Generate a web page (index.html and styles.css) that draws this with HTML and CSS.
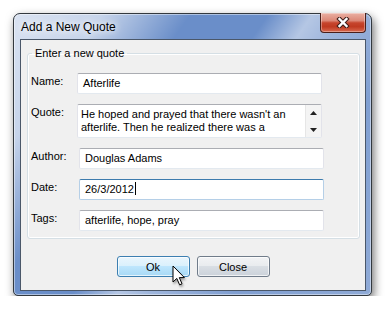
FILE: index.html
```html
<!DOCTYPE html>
<html lang="en">
<head>
    <meta charset="UTF-8">
    <title>Add a New Quote</title>
    <link rel="stylesheet" href="styles.css">
</head>
<body>

<div class="window">
    <div class="titlebar">
        <span class="title">Add a New Quote</span>
        <div class="close-btn">
            <svg width="14" height="11" viewBox="0 0 14 11">
                <path d="M3.5 2 L10.5 9 M10.5 2 L3.5 9" stroke="#3b1c18" stroke-width="4.4" stroke-linecap="square"/>
                <path d="M3.5 2 L10.5 9 M10.5 2 L3.5 9" stroke="#fff" stroke-width="2.4" stroke-linecap="square"/>
            </svg>
        </div>
    </div>

    <div class="client">
        <fieldset class="group">
            <legend>Enter a new quote</legend>

            <div class="row">
                <label>Name:</label>
                <div class="field">Afterlife</div>
            </div>

            <div class="row">
                <label>Quote:</label>
                <div class="field field-quote">
                    <div class="quote-text">He hoped and prayed that there wasn't an afterlife. Then he realized there was a</div>
                    <div class="scrollbar">
                        <svg width="7" height="4" viewBox="0 0 7 4"><path d="M3.5 0 L7 4 L0 4 Z" fill="#222"/></svg>
                        <svg width="7" height="4" viewBox="0 0 7 4"><path d="M0 0 L7 0 L3.5 4 Z" fill="#222"/></svg>
                    </div>
                </div>
            </div>

            <div class="row">
                <label>Author:</label>
                <div class="field field-shift">Douglas Adams</div>
            </div>

            <div class="row">
                <label>Date:</label>
                <div class="field field-shift field-focus">26/3/2012<span class="caret"></span></div>
            </div>

            <div class="row">
                <label>Tags:</label>
                <div class="field field-shift">afterlife, hope, pray</div>
            </div>
        </fieldset>

        <div class="buttons">
            <button class="btn btn-hot">Ok</button>
            <button class="btn">Close</button>
            <svg class="cursor" width="14" height="22" viewBox="0 0 14 22">
                <path d="M1 1 L1 17 L4.8 13.4 L7.6 19.8 L10 18.8 L7.3 12.6 L12.4 12.6 Z" fill="#fff" stroke="#000" stroke-width="1" stroke-linejoin="miter"/>
            </svg>
        </div>
    </div>
</div>

</body>
</html>
```

FILE: styles.css
```css
body {
    margin: 0;
    background-color: #fff;
    font-family: "Liberation Sans", Arial, sans-serif;
    font-size: 11px;
    color: #000;
}
.window {
    position: relative;
    display: flex;
    flex-direction: column;
    box-sizing: border-box;
    width: 359px;
    height: 283px;
    margin: 13px 0 0 13px;
    padding: 0 5px 4px 6px;
    border: 1px solid #33393f;
    border-radius: 7px 7px 5px 5px;
    background:
        linear-gradient(125deg,
            rgba(255, 255, 255, 0.75) 0%,
            rgba(255, 255, 255, 0.62) 16%,
            rgba(255, 255, 255, 0) 32%,
            rgba(255, 255, 255, 0) 46%,
            rgba(255, 255, 255, 0.5) 54%,
            rgba(255, 255, 255, 0.35) 60%,
            rgba(255, 255, 255, 0.15) 75%,
            rgba(255, 255, 255, 0.25) 100%),
        #6a8ec9;
    box-shadow: inset 0 0 0 1px rgba(255, 255, 255, 0.45), 2px 4px 10px rgba(0, 0, 0, 0.55);
}
.titlebar {
    display: flex;
    align-items: flex-start;
    height: 25px;
}
.title {
    padding: 5px 0 0 1px;
    font-size: 12px;
    line-height: 16px;
    text-shadow: 0 0 6px #fff, 0 0 10px rgba(255, 255, 255, 0.9);
}
.close-btn {
    display: flex;
    align-items: center;
    justify-content: center;
    box-sizing: border-box;
    width: 46px;
    height: 20px;
    margin: -1px 0 0 auto;
    border: 1px solid #4a1f19;
    border-top: none;
    border-radius: 0 0 4px 4px;
    background: linear-gradient(#eab0a3 0%, #dc8877 40%, #c6452d 52%, #bf3a21 72%, #d96a50 100%);
    box-shadow: inset 0 0 0 1px rgba(255, 255, 255, 0.35);
}
.client {
    position: relative;
    flex: 1;
    border: 1px solid #4a5769;
    background-color: #f0f0f0;
}
.group {
    margin: 6px 5px 0 6px;
    padding: 12px 3px 7px 3px;
    border: 1px solid #d5dfe5;
    border-radius: 3px;
    box-shadow: inset 0 0 0 1px #fff;
}
.group legend {
    margin-left: 1px;
    padding: 0 3px;
    font-size: 11px;
    line-height: 15px;
}
.row {
    display: flex;
    align-items: flex-start;
}
.row + .row {
    margin-top: 10px;
}
label {
    width: 46px;
    flex: none;
    padding-top: 1px;
    line-height: 14px;
}
.field {
    box-sizing: border-box;
    width: 245px;
    height: 21px;
    padding: 0 5px;
    line-height: 19px;
    background-color: #fff;
    border: 1px solid #e2e3ea;
    border-top-color: #abadb3;
    border-bottom-color: #e3e9ef;
    border-radius: 2px;
    white-space: nowrap;
}
.field-shift {
    margin-left: 2px;
}
.field-focus {
    border-color: #b5cfe7;
    border-top-color: #3d7bad;
}
.caret {
    display: inline-block;
    width: 1px;
    height: 13px;
    margin-left: 1px;
    vertical-align: -2px;
    background-color: #000;
}
.field-quote {
    display: flex;
    height: 34px;
    padding: 0 0 0 3px;
    white-space: normal;
}
.quote-text {
    flex: 1;
    padding-top: 3px;
    line-height: 13px;
    overflow: hidden;
}
.scrollbar {
    display: flex;
    flex-direction: column;
    justify-content: space-between;
    align-items: center;
    width: 16px;
    padding: 6px 0 5px;
    box-sizing: border-box;
    background-color: #f4f4f4;
    border-left: 1px solid #e6e6e6;
}
.buttons {
    position: relative;
    display: flex;
    justify-content: center;
    gap: 7px;
    margin-top: 17px;
}
.btn {
    box-sizing: border-box;
    width: 73px;
    height: 21px;
    padding: 0;
    font-family: inherit;
    font-size: 11px;
    color: #000;
    border: 1px solid #707c8a;
    border-radius: 3px;
    background: linear-gradient(#f2f3f5 0%, #e8ebee 50%, #d9dee4 50%, #cbd2da 100%);
    box-shadow: inset 0 0 0 1px rgba(255, 255, 255, 0.7);
}
.btn-hot {
    border-color: #3c7fb1;
    background: linear-gradient(#eaf6fd 0%, #d9f0fc 50%, #bee6fd 50%, #a7d9f5 100%);
}
.cursor {
    position: absolute;
    left: 151px;
    top: 9px;
    filter: drop-shadow(1px 2px 1px rgba(0, 0, 0, 0.35));
}
```
